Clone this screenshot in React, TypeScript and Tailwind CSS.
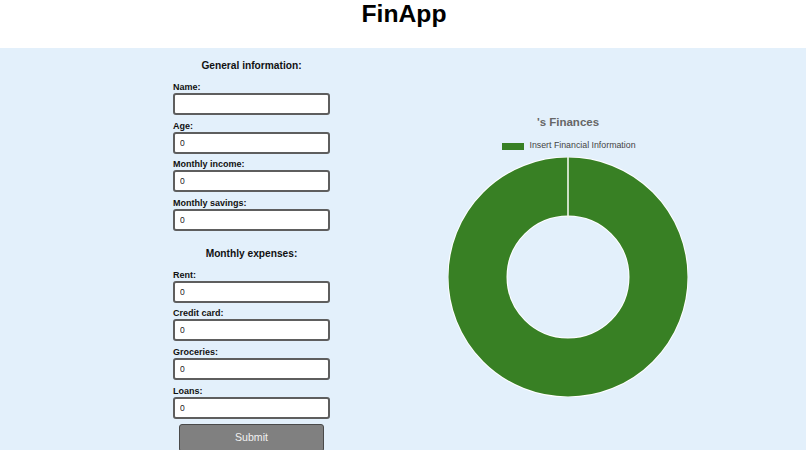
import React from 'react';

const general = [
  { label: 'Name:', value: '' },
  { label: 'Age:', value: '0' },
  { label: 'Monthly income:', value: '0' },
  { label: 'Monthly savings:', value: '0' },
];

const expenses = [
  { label: 'Rent:', value: '0' },
  { label: 'Credit card:', value: '0' },
  { label: 'Groceries:', value: '0' },
  { label: 'Loans:', value: '0' },
];

function Field({ label, value }: { label: string; value: string }) {
  return (
    <div className="flex flex-col mb-[5.7px]">
      <label className="text-[9px] leading-[11px] font-bold text-[#111]">{label}</label>
      <input
        readOnly
        value={value}
        className="h-[22px] w-full bg-white border-2 border-[#5e5e5e] rounded-[3px] px-[5px] text-[8.5px] text-[#222] outline-none"
      />
    </div>
  );
}

function Heading({ children }: { children: React.ReactNode }) {
  return (
    <h3 className="text-center text-[10.2px] leading-[14px] font-bold text-[#111] mb-[9px]">
      {children}
    </h3>
  );
}

function Donut() {
  return (
    <svg width="240" height="240" viewBox="0 0 240 240">
      <circle cx="120" cy="120" r="90.5" fill="none" stroke="#fff" strokeWidth="60" />
      <circle cx="120" cy="120" r="90.5" fill="none" stroke="#388024" strokeWidth="58" />
      <line x1="120" y1="0" x2="120" y2="61" stroke="#f2f7ee" strokeWidth="1.6" />
    </svg>
  );
}

export default function App() {
  return (
    <div className="min-h-screen bg-[#e3f0fb]" style={{ fontFamily: '"Liberation Sans", Arial, sans-serif' }}>
      {/* Header */}
      <header className="h-[48px] bg-white flex justify-center">
        <h1 className="text-[24.7px] leading-[28px] font-bold text-black ml-[2px]">FinApp</h1>
      </header>

      <div className="flex pl-[173px]">
        {/* Form */}
        <form className="w-[157px] pt-[11px] flex flex-col">
          <Heading>General information:</Heading>
          {general.map((f) => (
            <Field key={f.label} {...f} />
          ))}
          <div className="h-[10px]" />
          <Heading>Monthly expenses:</Heading>
          {expenses.map((f) => (
            <Field key={f.label} {...f} />
          ))}
          <div className="flex justify-center">
            <button
              type="button"
              className="w-[145px] h-[28px] -mt-[0.7px] bg-[#808080] border border-[#4a4a4a] rounded-[3px] text-[10.6px] text-[#f0f0f0]"
            >
              Submit
            </button>
          </div>
        </form>

        {/* Chart */}
        <div className="ml-[78px] w-[320px] flex flex-col items-center pt-[67px]">
          <div className="text-[11.5px] leading-[14px] font-bold text-[#666]">'s Finances</div>
          <div className="mt-[11px] h-[12px] flex items-center gap-[5px] ml-[2px]">
            <span className="w-[22px] h-[7px] bg-[#388024]" />
            <span className="text-[8.8px] text-[#444]">Insert Financial Information</span>
          </div>
          <div className="mt-[5px]">
            <Donut />
          </div>
        </div>
      </div>
    </div>
  );
}
